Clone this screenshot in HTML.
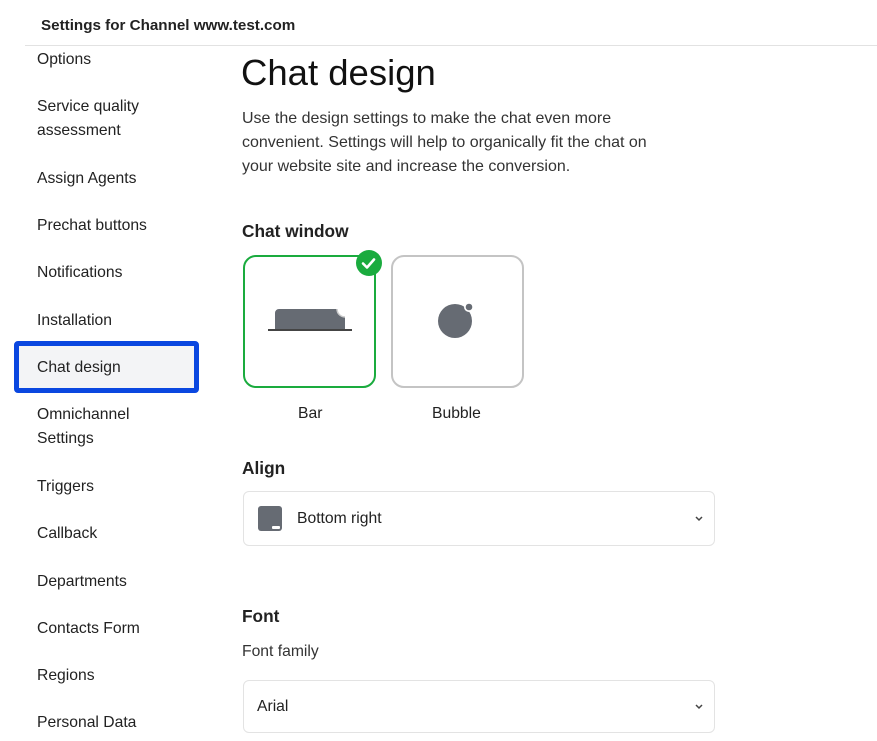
<!DOCTYPE html>
<html><head><meta charset="utf-8"><style>
*{margin:0;padding:0;box-sizing:border-box}
body{width:877px;height:741px;overflow:hidden;background:#fff;font-family:"Liberation Sans",sans-serif;color:#1f2328;position:relative}
.a{position:absolute;white-space:nowrap}
.s{font-size:15.7px;left:37px;line-height:24px;color:#222}
.sel{position:absolute;left:243px;width:472px;border:1px solid #e3e3e3;border-radius:6px;background:#fff}
.chev{position:absolute;right:10px;top:50%;margin-top:-5px}
</style></head><body>
<div class="a" style="left:41px;top:17px;font-size:15.2px;font-weight:bold;color:#222">Settings for Channel www.test.com</div>
<div class="a" style="left:25px;top:45px;width:852px;height:1px;background:#e2e2e2"></div>

<div class="a s" style="top:48px">Options</div>
<div class="a s" style="top:95px">Service quality<br>assessment</div>
<div class="a s" style="top:167px">Assign Agents</div>
<div class="a s" style="top:214px">Prechat buttons</div>
<div class="a s" style="top:261px">Notifications</div>
<div class="a s" style="top:309px">Installation</div>
<div class="a" style="left:14px;top:341px;width:185px;height:52px;border:5px solid #0a47e0;border-radius:4px;background:#f3f4f6"></div>
<div class="a s" style="top:356px">Chat design</div>
<div class="a s" style="top:403px">Omnichannel<br>Settings</div>
<div class="a s" style="top:475px">Triggers</div>
<div class="a s" style="top:522px">Callback</div>
<div class="a s" style="top:570px">Departments</div>
<div class="a s" style="top:617px">Contacts Form</div>
<div class="a s" style="top:664px">Regions</div>
<div class="a s" style="top:711px">Personal Data</div>

<div class="a" style="left:241px;top:51px;font-size:36.5px;line-height:44px;color:#111">Chat design</div>
<div class="a" style="left:242px;top:107px;font-size:16px;line-height:24px;color:#333">Use the design settings to make the chat even more<br>convenient. Settings will help to organically fit the chat on<br>your website site and increase the conversion.</div>

<div class="a" style="left:242px;top:221px;font-size:17.3px;font-weight:bold;color:#222">Chat window</div>
<div class="a" style="left:243px;top:255px;width:133px;height:133px;border:2px solid #1aab3e;border-radius:13px"></div>
<div class="a" style="left:391px;top:255px;width:133px;height:133px;border:2px solid #c4c4c4;border-radius:13px"></div>
<svg class="a" style="left:243px;top:250px" width="290" height="140">
<circle cx="126" cy="13" r="13" fill="#1aab3e"/>
<path d="M120 13.5l4 4 7-8" stroke="#fff" stroke-width="2.6" fill="none" stroke-linecap="round" stroke-linejoin="round"/>
<path d="M32 79v-16a4 4 0 0 1 4-4h58a8 8 0 0 0 8 8v12z" fill="#666b73"/>
<path d="M94 59a8 8 0 0 0 8 8" stroke="#ccc" stroke-width="1.5" fill="none"/>
<rect x="25" y="79" width="84" height="2" fill="#444"/>
<circle cx="212" cy="71" r="17" fill="#666b73"/>
<circle cx="226" cy="57" r="5" fill="#fff"/><circle cx="226" cy="57" r="3.3" fill="#666b73"/>
</svg>
<div class="a" style="left:298px;top:405px;font-size:15.7px;color:#222">Bar</div>
<div class="a" style="left:432px;top:405px;font-size:15.7px;color:#222">Bubble</div>

<div class="a" style="left:242px;top:458px;font-size:17.3px;font-weight:bold;color:#222">Align</div>
<div class="sel" style="top:491px;height:55px">
<div class="a" style="left:14px;top:14px;width:24px;height:25px;background:#666b73;border-radius:3px"><div class="a" style="right:2px;bottom:2px;width:8px;height:3px;background:#fff;border-radius:1px"></div></div>
<div class="a" style="left:53px;top:18px;font-size:15.7px;color:#222">Bottom right</div>
<svg class="chev" width="10" height="10"><path d="M2 3l3 3 3-3" stroke="#444" stroke-width="1.5" fill="none"/></svg>
</div>

<div class="a" style="left:242px;top:606px;font-size:17.3px;font-weight:bold;color:#222">Font</div>
<div class="a" style="left:242px;top:643px;font-size:15.7px;color:#333">Font family</div>
<div class="sel" style="top:680px;height:53px">
<div class="a" style="left:13px;top:17px;font-size:15.7px;color:#222">Arial</div>
<svg class="chev" width="10" height="10"><path d="M2 3l3 3 3-3" stroke="#444" stroke-width="1.5" fill="none"/></svg>
</div>
</body></html>
